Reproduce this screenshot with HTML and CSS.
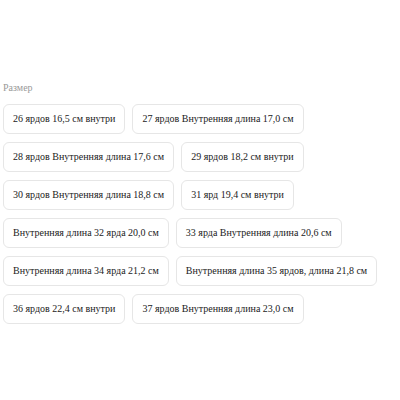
FILE: index.html
```html
<!DOCTYPE html>
<html lang="ru">
<head>
<meta charset="utf-8">
<link rel="stylesheet" href="styles.css">
</head>
<body>
<div class="picker">
  <div class="label">Размер</div>
  <div class="options">
    <div class="opt">26 ярдов 16,5 см внутри</div>
    <div class="opt">27 ярдов Внутренняя длина 17,0 см</div>
    <div class="opt">28 ярдов Внутренняя длина 17,6 см</div>
    <div class="opt">29 ярдов 18,2 см внутри</div>
    <div class="opt">30 ярдов Внутренняя длина 18,8 см</div>
    <div class="opt">31 ярд 19,4 см внутри</div>
    <div class="opt">Внутренняя длина 32 ярда 20,0 см</div>
    <div class="opt">33 ярда Внутренняя длина 20,6 см</div>
    <div class="opt">Внутренняя длина 34 ярда 21,2 см</div>
    <div class="opt">Внутренняя длина 35 ярдов, длина 21,8 см</div>
    <div class="opt">36 ярдов 22,4 см внутри</div>
    <div class="opt">37 ярдов Внутренняя длина 23,0 см</div>
  </div>
</div>
</body>
</html>
```
FILE: styles.css
```css
html, body {
  margin: 0;
  background: #fff;
}
body {
  font-family: "Liberation Serif", "Times New Roman", serif;
  color: #222;
}
.picker {
  padding: 82px 10px 0 3px;
}
.label {
  font-size: 10px;
  color: #999;
  line-height: 12px;
  margin-bottom: 10px;
}
.options {
  display: flex;
  flex-wrap: wrap;
  gap: 8px 7px;
}
.opt {
  font-size: 10px;
  line-height: 12px;
  padding: 8px 9px;
  border: 1px solid #e6e6e6;
  border-radius: 6px;
  background: #fff;
}
```
